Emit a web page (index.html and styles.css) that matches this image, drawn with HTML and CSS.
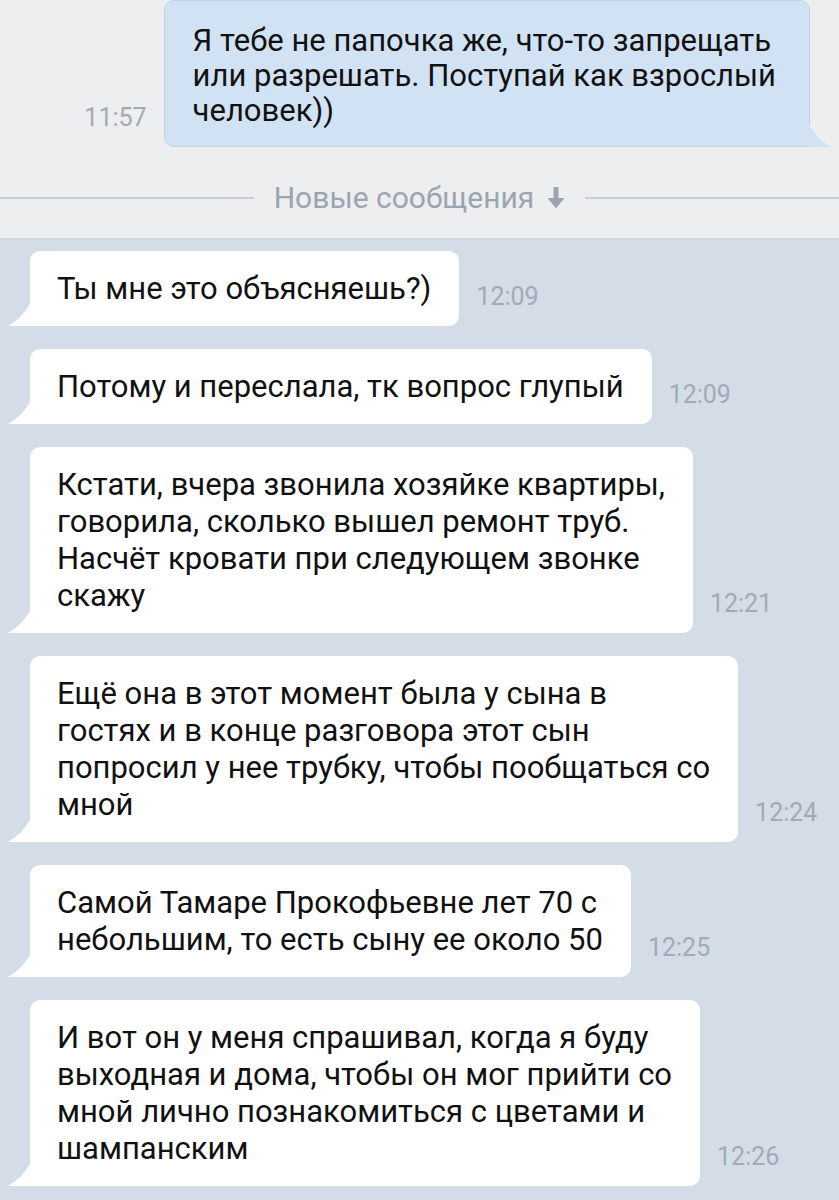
FILE: index.html
```html
<!DOCTYPE html>
<html lang="ru">
<head>
<meta charset="utf-8">
<link rel="stylesheet" href="styles.css">
</head>
<body>
<div class="top">
  <div class="row row-out">
    <span class="time">11:57</span>
    <div class="bubble bubble-out">Я тебе не папочка же, что-то запрещать<br>или разрешать. Поступай как взрослый<br>человек))</div>
  </div>
  <div class="divider">
    <span class="line"></span>
    <span class="label">Новые сообщения
      <svg class="arrow" width="18" height="22" viewBox="0 0 18 22"><rect x="6.5" y="0" width="5" height="12" fill="#9ba5b1"/><path d="M0.5 11 L17.5 11 L9 21.5 Z" fill="#9ba5b1"/></svg>
    </span>
    <span class="line"></span>
  </div>
</div>
<div class="feed">
  <div class="row">
    <div class="bubble">Ты мне это объясняешь?)</div>
    <span class="time">12:09</span>
  </div>
  <div class="row">
    <div class="bubble">Потому и переслала, тк вопрос глупый</div>
    <span class="time">12:09</span>
  </div>
  <div class="row">
    <div class="bubble">Кстати, вчера звонила хозяйке квартиры,<br>говорила, сколько вышел ремонт труб.<br>Насчёт кровати при следующем звонке<br>скажу</div>
    <span class="time">12:21</span>
  </div>
  <div class="row">
    <div class="bubble">Ещё она в этот момент была у сына в<br>гостях и в конце разговора этот сын<br>попросил у нее трубку, чтобы пообщаться со<br>мной</div>
    <span class="time">12:24</span>
  </div>
  <div class="row">
    <div class="bubble">Самой Тамаре Прокофьевне лет 70 с<br>небольшим, то есть сыну ее около 50</div>
    <span class="time">12:25</span>
  </div>
  <div class="row">
    <div class="bubble">И вот он у меня спрашивал, когда я буду<br>выходная и дома, чтобы он мог прийти со<br>мной лично познакомиться с цветами и<br>шампанским</div>
    <span class="time">12:26</span>
  </div>
</div>
</body>
</html>
```
FILE: styles.css
```css
* { box-sizing: border-box; }
html, body { margin: 0; padding: 0; }
body {
  width: 839px;
  height: 1200px;
  overflow: hidden;
  font-family: Roboto, "Noto Sans", sans-serif;
  background: #d4dde7;
}
.top {
  background: #edeef0;
  height: 240px;
  border-bottom: 2px solid #cdd6e0;
}
.row {
  display: flex;
  align-items: flex-end;
  gap: 17px;
}
.row-out {
  justify-content: flex-end;
  padding-right: 29px;
}
.time {
  font-size: 25px;
  color: #a3aab4;
  line-height: 28px;
  padding-bottom: 15px;
}
.bubble {
  position: relative;
  background: #fff;
  color: #111;
  font-size: 31px;
  line-height: 37px;
  padding: 19px 28px 19px 27px;
  border-radius: 10px;
  border-bottom-left-radius: 0;
}
.bubble::before {
  content: "";
  position: absolute;
  left: -22px;
  bottom: 0;
  width: 22px;
  height: 22px;
  background: #fff;
  clip-path: path('M22 0 L22 22 L0 22 Q14 14 22 0 Z');
}
.bubble-out {
  background: #d1e2f5;
  border: 1px solid #c2d3e6;
  border-radius: 10px;
  border-bottom-right-radius: 0;
  line-height: 35px;
  padding: 22px 33px 18px 28px;
}
.bubble-out::before {
  left: auto;
  right: -21px;
  bottom: -1px;
  width: 21px;
  height: 22px;
  background: #d1e2f5;
  clip-path: path('M0 0 L0 22 L21 22 Q8 14 0 0 Z');
}
.divider {
  display: flex;
  align-items: center;
  margin-top: 34px;
  gap: 20px;
}
.divider .line {
  flex: 1;
  height: 2px;
  background: #c9ced5;
}
.divider .label {
  font-size: 30px;
  line-height: 34px;
  color: #9ba5b1;
  display: flex;
  align-items: center;
  gap: 13px;
}
.feed {
  padding: 11px 0 0 30px;
  display: flex;
  flex-direction: column;
  gap: 23px;
}
```
